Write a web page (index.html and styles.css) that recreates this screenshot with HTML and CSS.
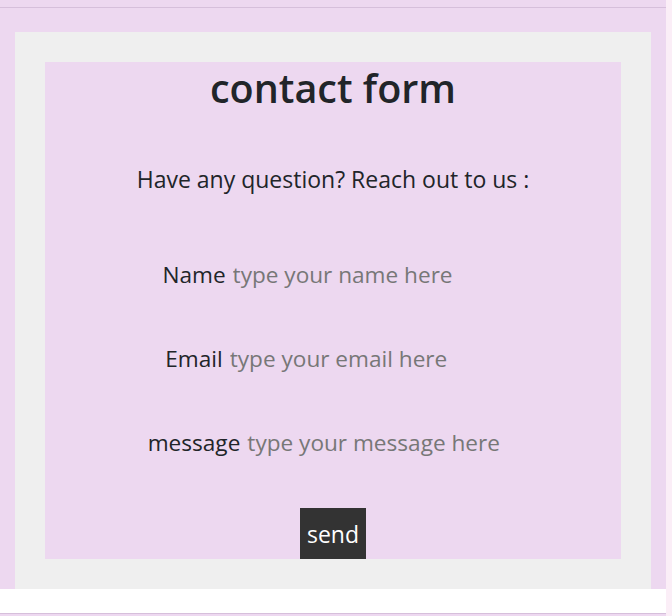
FILE: index.html
```html
<!DOCTYPE html>
<html>
<head>
<meta charset="utf-8">
<link rel="stylesheet" href="styles.css">
</head>
<body>
<div class="page">
  <div class="main">
    <div class="topline"></div>
    <div class="outer">
      <div class="card">
        <h1 class="title">contact form</h1>
        <p class="lead">Have any question? Reach out to us :</p>
        <form class="form">
          <div class="row"><label class="lbl">Name</label><input class="inp" type="text" placeholder="type your name here"></div>
          <div class="row"><label class="lbl">Email</label><input class="inp" type="text" placeholder="type your email here"></div>
          <div class="row"><label class="lbl">message</label><input class="inp" type="text" placeholder="type your message here"></div>
          <button class="send" type="button">send</button>
        </form>
      </div>
    </div>
    <div class="whiteband"></div>
    <div class="bottomline"></div>
  </div>
  <div class="strip"></div>
</div>
</body>
</html>
```

FILE: styles.css
```css
html, body {
  margin: 0;
  padding: 0;
  height: 616px;
  overflow: hidden;
}
body {
  background: #edd8f0;
  font-family: "Open Sans", "Noto Sans", sans-serif;
  color: #212529;
}
.page {
  display: flex;
  height: 616px;
}
.main {
  width: 666px;
  display: flex;
  flex-direction: column;
}
.strip {
  width: 6px;
  background: #fbeef7;
}
.topline {
  margin-top: 7px;
  height: 1px;
  background: #d6bfdb;
}
.outer {
  margin: 24px 15px 0 15px;
  background: #efefef;
  padding: 30px;
}
.card {
  background: #edd8f0;
  display: flex;
  flex-direction: column;
  align-items: center;
}
.title {
  margin: 0;
  font-size: 39.5px;
  line-height: 52px;
  font-weight: 600;
}
.lead {
  margin: 50px 0 0 0;
  font-size: 23px;
  line-height: 30px;
}
.form {
  margin-top: 66px;
  display: flex;
  flex-direction: column;
  align-items: center;
  gap: 54px;
}
.row {
  display: flex;
  align-items: center;
  gap: 7px;
  height: 30px;
}
.lbl {
  font-size: 22.6px;
  line-height: 30px;
}
.inp {
  width: 271px;
  border: none;
  padding: 0;
  margin: 0;
  background: transparent;
  font-family: inherit;
  font-size: 22.6px;
  line-height: 30px;
  height: 30px;
  color: #212529;
  outline: none;
}
.inp::placeholder {
  color: #777777;
}
.send {
  margin-top: -4px;
  height: 51px;
  padding: 0 6.5px;
  border: none;
  background: #333333;
  color: #ffffff;
  font-family: inherit;
  font-size: 23px;
  line-height: 30px;
}
.whiteband {
  height: 24px;
  background: #ffffff;
}
.bottomline {
  height: 1px;
  background: #d6bfdb;
}
```
